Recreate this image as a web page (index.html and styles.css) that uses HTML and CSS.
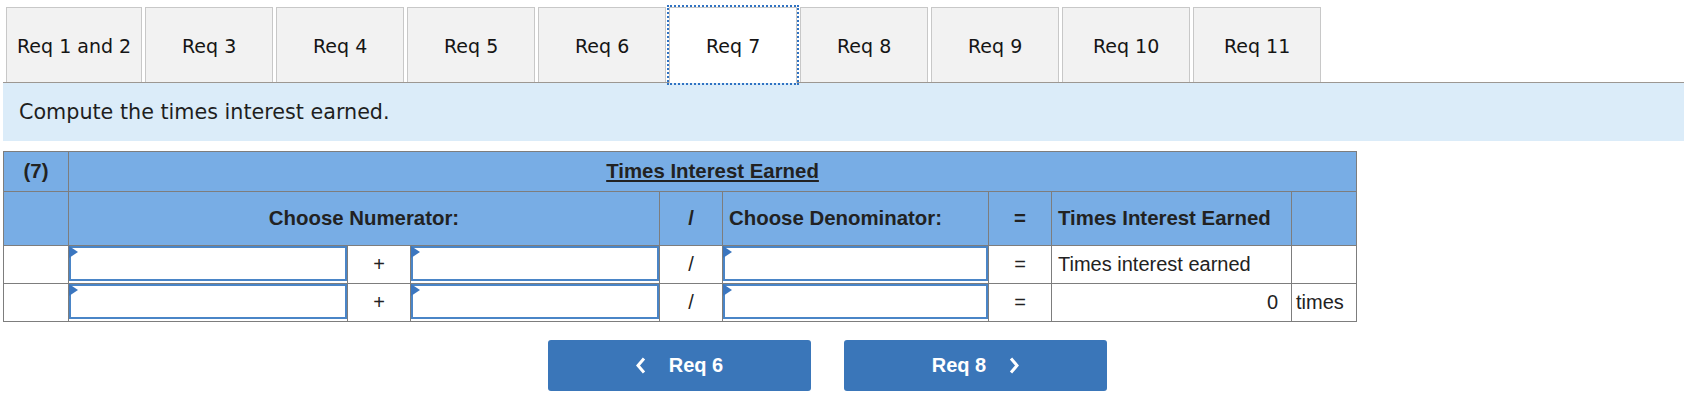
FILE: index.html
```html
<!DOCTYPE html>
<html lang="en">
<head>
    <meta charset="UTF-8">
    <title>Times Interest Earned</title>
    <link rel="stylesheet" href="styles.css">
</head>
<body>
<main class="page">
    <ul class="tabs">
        <li class="tab">Req 1 and 2</li>
        <li class="tab">Req 3</li>
        <li class="tab">Req 4</li>
        <li class="tab">Req 5</li>
        <li class="tab">Req 6</li>
        <li class="tab active">Req 7</li>
        <li class="tab">Req 8</li>
        <li class="tab">Req 9</li>
        <li class="tab">Req 10</li>
        <li class="tab">Req 11</li>
    </ul>

    <div class="prompt">Compute the times interest earned.</div>

    <table class="ratio">
        <colgroup>
            <col class="c-num">
            <col class="c-pick1">
            <col class="c-op">
            <col class="c-pick2">
            <col class="c-op">
            <col class="c-pick3">
            <col class="c-op">
            <col class="c-result">
            <col class="c-unit">
        </colgroup>
        <tr class="head-title">
            <th class="center">(7)</th>
            <th colspan="8" class="center"><u>Times Interest Earned</u></th>
        </tr>
        <tr class="head-cols">
            <th></th>
            <th colspan="3" class="center">Choose Numerator:</th>
            <th class="center">/</th>
            <th>Choose Denominator:</th>
            <th class="center">=</th>
            <th>Times Interest Earned</th>
            <th></th>
        </tr>
        <tr class="row">
            <td></td>
            <td class="pick-cell"><div class="pick"><input type="text"></div></td>
            <td class="center">+</td>
            <td class="pick-cell"><div class="pick"><input type="text"></div></td>
            <td class="center">/</td>
            <td class="pick-cell"><div class="pick"><input type="text"></div></td>
            <td class="center">=</td>
            <td>Times interest earned</td>
            <td></td>
        </tr>
        <tr class="row">
            <td></td>
            <td class="pick-cell"><div class="pick"><input type="text"></div></td>
            <td class="center">+</td>
            <td class="pick-cell"><div class="pick"><input type="text"></div></td>
            <td class="center">/</td>
            <td class="pick-cell"><div class="pick"><input type="text"></div></td>
            <td class="center">=</td>
            <td class="amount">0</td>
            <td class="unit">times</td>
        </tr>
    </table>

    <div class="pager">
        <button class="pager-btn">
            <svg width="10" height="17" viewBox="0 0 10 17"><polyline points="8,1.5 2,8.5 8,15.5" fill="none" stroke="#fff" stroke-width="3"/></svg>
            Req 6
        </button>
        <button class="pager-btn">
            Req 8
            <svg width="10" height="17" viewBox="0 0 10 17"><polyline points="2,1.5 8,8.5 2,15.5" fill="none" stroke="#fff" stroke-width="3"/></svg>
        </button>
    </div>
</main>
</body>
</html>
```

FILE: styles.css
```css
body {
    margin: 0;
    background: #fff;
    color: #1e1e1e;
}

.page {
    padding-left: 3px;
}

.tabs {
    display: flex;
    margin: 0;
    padding: 7px 0 0 3px;
    list-style: none;
    border-bottom: 1px solid #9c9792;
}

.tab {
    box-sizing: border-box;
    display: flex;
    align-items: center;
    justify-content: center;
    min-width: 128px;
    height: 75px;
    padding: 1px 10px 0;
    margin-right: 3px;
    background: #f2f2f2;
    border: 1px solid #c8c8c8;
    border-bottom: none;
    font-family: "DejaVu Sans", Verdana, sans-serif;
    font-size: 19px;
    color: #151515;
}

.tab.active {
    background: #fff;
    height: 76px;
    margin-bottom: -1px;
    outline: 2px dotted #2f72c2;
}

.prompt {
    display: flex;
    align-items: center;
    height: 58px;
    padding-left: 16px;
    background: #dbecf9;
    font-family: "DejaVu Sans", Verdana, sans-serif;
    font-size: 20.7px;
    color: #1e1e1e;
}

.ratio {
    margin-top: 10px;
    width: 1354px;
    table-layout: fixed;
    border-collapse: collapse;
    font-family: "Liberation Sans", Arial, sans-serif;
    font-size: 20px;
    color: #222;
}

.c-num { width: 65px; }
.c-pick1 { width: 279px; }
.c-op { width: 63px; }
.c-pick2 { width: 249px; }
.c-pick3 { width: 266px; }
.c-result { width: 240px; }
.c-unit { width: 65px; }

.ratio th,
.ratio td {
    border: 1px solid #7d7d7d;
    padding: 0 6px;
    text-align: left;
    white-space: nowrap;
}

.ratio th {
    background: #78ade5;
    font-weight: bold;
    font-size: 20.4px;
}

.ratio .center {
    text-align: center;
}

.head-title {
    height: 40px;
}

.head-cols {
    height: 54px;
}

.row {
    height: 38px;
}

.ratio td.pick-cell {
    padding: 0;
    vertical-align: top;
}

.pick {
    position: relative;
}

.pick::before {
    content: "";
    position: absolute;
    top: 0;
    left: 0;
    border-left: 9px solid #3b76bf;
    border-top: 6px solid transparent;
    border-bottom: 6px solid transparent;
}

.pick input {
    display: block;
    box-sizing: border-box;
    width: 100%;
    height: 35px;
    margin: 0;
    border: 2px solid #4a85c7;
    background: #fff;
}

.ratio td.amount {
    text-align: right;
    padding-right: 13px;
}

.ratio td.unit {
    padding-left: 4px;
}

.pager {
    display: flex;
    gap: 33px;
    margin-top: 18px;
    padding-left: 545px;
}

.pager-btn {
    display: flex;
    align-items: center;
    justify-content: center;
    gap: 23px;
    width: 263px;
    height: 51px;
    border: none;
    border-radius: 3px;
    background: #3a76b9;
    color: #fff;
    font-family: "Liberation Sans", Arial, sans-serif;
    font-size: 20px;
    font-weight: bold;
}
```
